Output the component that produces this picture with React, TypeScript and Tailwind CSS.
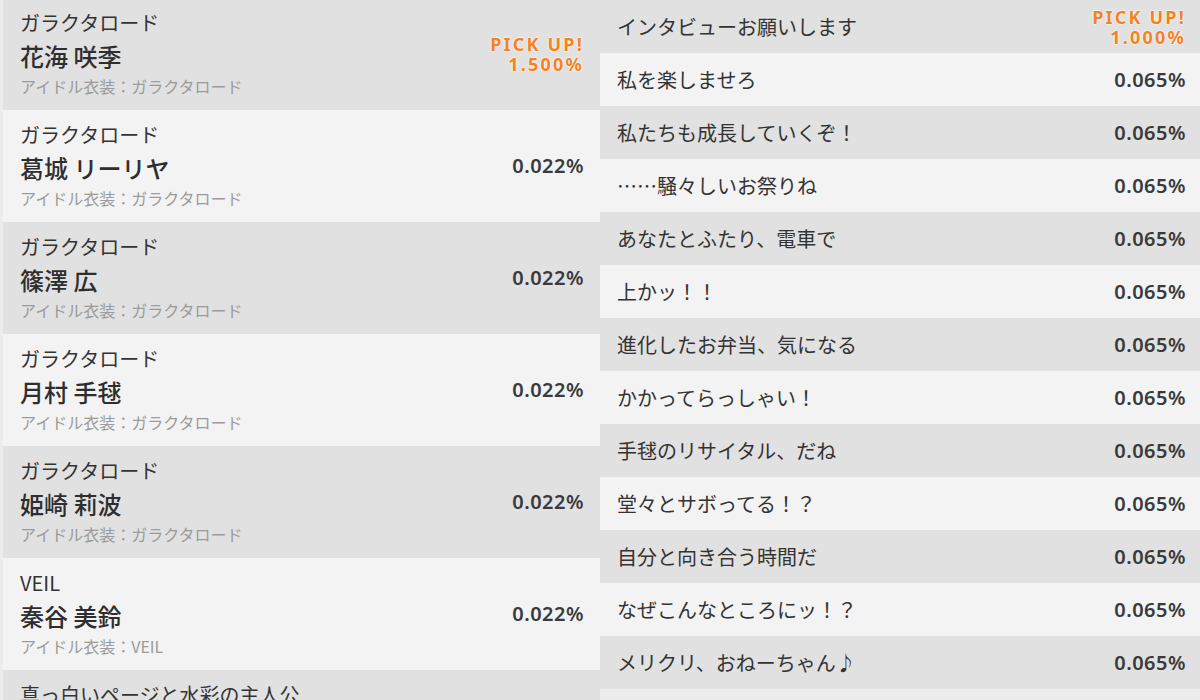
const font = '[font-family:"Noto_Sans_CJK_JP","Noto_Sans",sans-serif]'
const numFont = '[font-family:"Noto_Sans","Noto_Sans_CJK_JP",sans-serif]'

type Card = {
  title: string
  name: string
  costume: string
  rate: string
  pickup?: boolean
}

const cards: Card[] = [
  { title: 'ガラクタロード', name: '花海 咲季', costume: 'ガラクタロード', rate: '1.500%', pickup: true },
  { title: 'ガラクタロード', name: '葛城 リーリヤ', costume: 'ガラクタロード', rate: '0.022%' },
  { title: 'ガラクタロード', name: '篠澤 広', costume: 'ガラクタロード', rate: '0.022%' },
  { title: 'ガラクタロード', name: '月村 手毬', costume: 'ガラクタロード', rate: '0.022%' },
  { title: 'ガラクタロード', name: '姫崎 莉波', costume: 'ガラクタロード', rate: '0.022%' },
  { title: 'VEIL', name: '秦谷 美鈴', costume: 'VEIL', rate: '0.022%' },
  { title: '真っ白いページと水彩の主人公', name: '', costume: '', rate: '' },
]

const memories: { title: string, rate: string, pickup?: boolean }[] = [
  { title: 'インタビューお願いします', rate: '1.000%', pickup: true },
  { title: '私を楽しませろ', rate: '0.065%' },
  { title: '私たちも成長していくぞ！', rate: '0.065%' },
  { title: '……騒々しいお祭りね', rate: '0.065%' },
  { title: 'あなたとふたり、電車で', rate: '0.065%' },
  { title: '上かッ！！', rate: '0.065%' },
  { title: '進化したお弁当、気になる', rate: '0.065%' },
  { title: 'かかってらっしゃい！', rate: '0.065%' },
  { title: '手毬のリサイタル、だね', rate: '0.065%' },
  { title: '堂々とサボってる！？', rate: '0.065%' },
  { title: '自分と向き合う時間だ', rate: '0.065%' },
  { title: 'なぜこんなところにッ！？', rate: '0.065%' },
  { title: 'メリクリ、おねーちゃん♪', rate: '0.065%' },
]

function PickUp ({ rate }: { rate: string }) {
  return (
    <div className={`text-right text-[18px] font-bold leading-[20px] tracking-[2.2px] text-[#f5821f] [text-shadow:0_0_2px_#fff,0_0_2px_#fff] ${numFont}`}>
      <div>PICK UP!</div>
      <div>{rate}</div>
    </div>
  )
}

function Rate ({ rate }: { rate: string }) {
  return <div className={`text-[20px] font-semibold tracking-[0.5px] text-[#3a3a3a] ${numFont}`}>{rate}</div>
}

export default function App () {
  return (
    <div className={`flex h-[700px] w-[1200px] overflow-hidden bg-[#ececec] ${font}`}>
      <div className="ml-[3px] mt-[-2px] flex w-[597px] flex-col">
        {cards.map((c, i) => (
          <div
            key={i}
            className={`flex h-[112px] shrink-0 items-center justify-between pl-[17px] pr-[16px] ${i % 2 === 0 ? 'bg-[#e1e1e1]' : 'bg-[#f3f3f3]'}`}
          >
            <div className="flex h-full flex-col pt-[12px]">
              <div className="h-[26px] text-[20px] leading-[26px] text-[#333]">{c.title}</div>
              <div className="mt-[5px] h-[30px] text-[24px] font-medium leading-[30px] text-[#2e2e2e]">{c.name}</div>
              <div className="mt-[3px] h-[24px] text-[16px] leading-[24px] text-[#9b9b9b]">
                {c.costume && `アイドル衣装：${c.costume}`}
              </div>
            </div>
            {c.pickup ? <PickUp rate={c.rate} /> : <Rate rate={c.rate} />}
          </div>
        ))}
      </div>
      <div className="flex w-[600px] flex-col">
        {memories.map((m, i) => (
          <div
            key={i}
            className={`flex h-[53px] shrink-0 items-center justify-between pl-[17px] pr-[14px] ${i % 2 === 0 ? 'bg-[#e1e1e1]' : 'bg-[#f3f3f3]'}`}
          >
            <div className="text-[20px] text-[#333]">{m.title}</div>
            {m.pickup ? <PickUp rate={m.rate} /> : <Rate rate={m.rate} />}
          </div>
        ))}
      </div>
    </div>
  )
}
